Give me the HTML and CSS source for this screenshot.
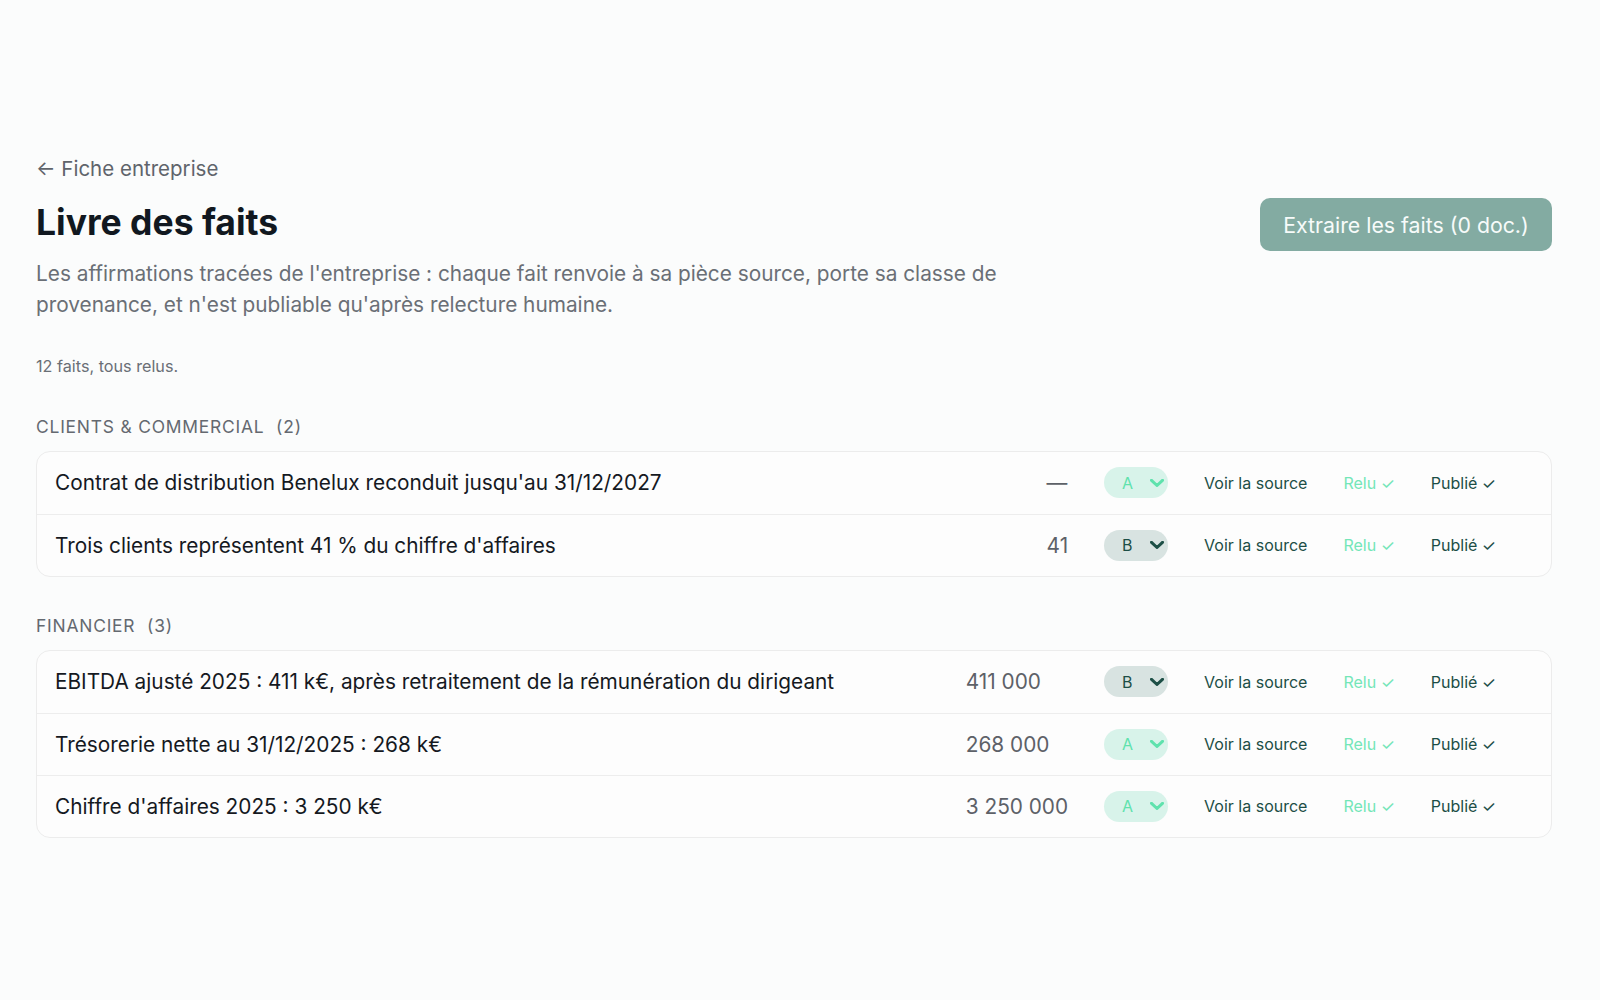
FILE: index.html
```html
<!DOCTYPE html>
<html lang="fr">
<head>
<meta charset="utf-8">
<title>Livre des faits</title>
<link rel="stylesheet" href="styles.css">
</head>
<body>
<main class="page">
  <a class="back" href="#">← Fiche entreprise</a>
  <header class="head">
    <div class="head-text">
      <h1 class="title">Livre des faits</h1>
      <p class="lead">Les affirmations tracées de l'entreprise : chaque fait renvoie à sa pièce source, porte sa classe de provenance, et n'est publiable qu'après relecture humaine.</p>
    </div>
    <button class="extract" type="button">Extraire les faits (0 doc.)</button>
  </header>
  <p class="count">12 faits, tous relus.</p>

  <section class="group">
    <h2 class="group-title">Clients &amp; commercial <span class="num">(2)</span></h2>
    <div class="card">
      <table class="facts">
        <tr>
          <td class="label">Contrat de distribution Benelux reconduit jusqu'au 31/12/2027</td>
          <td class="value">—</td>
          <td class="cls"><span class="select a">A<svg viewBox="0 0 14 8" class="chev"><path d="M1.5 1.3 L7 6.5 L12.5 1.3"/></svg></span></td>
          <td class="src"><a href="#">Voir la source</a></td>
          <td class="relu">Relu ✓</td>
          <td class="pub">Publié ✓</td>
        </tr>
        <tr>
          <td class="label">Trois clients représentent 41 % du chiffre d'affaires</td>
          <td class="value">41</td>
          <td class="cls"><span class="select b">B<svg viewBox="0 0 14 8" class="chev"><path d="M1.5 1.3 L7 6.5 L12.5 1.3"/></svg></span></td>
          <td class="src"><a href="#">Voir la source</a></td>
          <td class="relu">Relu ✓</td>
          <td class="pub">Publié ✓</td>
        </tr>
      </table>
    </div>
  </section>

  <section class="group">
    <h2 class="group-title">Financier <span class="num">(3)</span></h2>
    <div class="card">
      <table class="facts">
        <tr>
          <td class="label">EBITDA ajusté 2025 : 411 k€, après retraitement de la rémunération du dirigeant</td>
          <td class="value">411 000</td>
          <td class="cls"><span class="select b">B<svg viewBox="0 0 14 8" class="chev"><path d="M1.5 1.3 L7 6.5 L12.5 1.3"/></svg></span></td>
          <td class="src"><a href="#">Voir la source</a></td>
          <td class="relu">Relu ✓</td>
          <td class="pub">Publié ✓</td>
        </tr>
        <tr>
          <td class="label">Trésorerie nette au 31/12/2025 : 268 k€</td>
          <td class="value">268 000</td>
          <td class="cls"><span class="select a">A<svg viewBox="0 0 14 8" class="chev"><path d="M1.5 1.3 L7 6.5 L12.5 1.3"/></svg></span></td>
          <td class="src"><a href="#">Voir la source</a></td>
          <td class="relu">Relu ✓</td>
          <td class="pub">Publié ✓</td>
        </tr>
        <tr>
          <td class="label">Chiffre d'affaires 2025 : 3 250 k€</td>
          <td class="value">3 250 000</td>
          <td class="cls"><span class="select a">A<svg viewBox="0 0 14 8" class="chev"><path d="M1.5 1.3 L7 6.5 L12.5 1.3"/></svg></span></td>
          <td class="src"><a href="#">Voir la source</a></td>
          <td class="relu">Relu ✓</td>
          <td class="pub">Publié ✓</td>
        </tr>
      </table>
    </div>
  </section>
</main>
</body>
</html>
```

FILE: styles.css
```css
* { box-sizing: border-box; }
html, body { margin: 0; padding: 0; }
body {
  background: #fbfcfc;
  font-family: Inter, "Noto Sans", "Liberation Sans", sans-serif;
  color: #15191f;
}
.page {
  width: 1516px;
  margin-left: 36px;
  padding-top: 156px;
}
.back {
  display: inline-block;
  font-size: 20.5px;
  line-height: 26px;
  color: #5f646b;
  text-decoration: none;
}
.head {
  display: flex;
  justify-content: space-between;
  align-items: flex-start;
  margin-top: 19px;
}
.head-text { width: 1020px; }
.title {
  margin: 0;
  font-size: 35.5px;
  line-height: 44px;
  font-weight: 700;
  color: #111820;
}
.lead {
  margin: 14px 0 0;
  font-size: 20.8px;
  line-height: 30.5px;
  color: #6a6f76;
}
.extract {
  margin-top: -3px;
  width: 292px;
  height: 53px;
  padding: 0;
  border: none;
  border-radius: 10px;
  background: #83aba2;
  color: #f7fbfa;
  font-family: inherit;
  font-size: 21.3px;
}
.count {
  margin: 36px 0 0;
  font-size: 16.2px;
  line-height: 20px;
  color: #6a6f76;
}
.group { margin-top: 40px; }
.group + .group { margin-top: 38px; }
.group-title {
  margin: 0 0 13px;
  font-size: 17.4px;
  line-height: 22px;
  font-weight: 400;
  text-transform: uppercase;
  letter-spacing: 0.8px;
  color: #646970;
}
.group-title .num { margin-left: 6px; }
.card {
  border: 1px solid #ececec;
  border-radius: 14px;
  background: #fdfdfd;
  overflow: hidden;
}
.facts {
  width: 100%;
  border-collapse: collapse;
}
.facts td {
  height: 62px;
  padding: 0 18px;
  white-space: nowrap;
  vertical-align: middle;
}
.facts tr + tr td { border-top: 1.5px solid #ededed; }
.label {
  width: 100%;
  font-size: 20.8px;
  color: #15191f;
}
.value {
  font-size: 20.8px;
  color: #5d6168;
}
.select {
  display: inline-flex;
  align-items: center;
  justify-content: space-between;
  width: 64px;
  height: 31px;
  padding: 0 4px 0 18px;
  border-radius: 16px;
  font-size: 16px;
}
.chev {
  width: 14px;
  height: 8px;
  fill: none;
  stroke: currentColor;
  stroke-width: 3;
  stroke-linecap: round;
  stroke-linejoin: round;
}
.select.a { background: #d8f3ea; color: #5fe2ad; }
.select.b { background: #d8e3e1; color: #1d4f46; }
.src a {
  font-size: 16px;
  color: #1c4e46;
  text-decoration: none;
}
.relu {
  font-size: 16px;
  color: #74e6b8;
}
.pub {
  font-size: 16px;
  color: #1c4e46;
  padding-right: 55px !important;
}
```
